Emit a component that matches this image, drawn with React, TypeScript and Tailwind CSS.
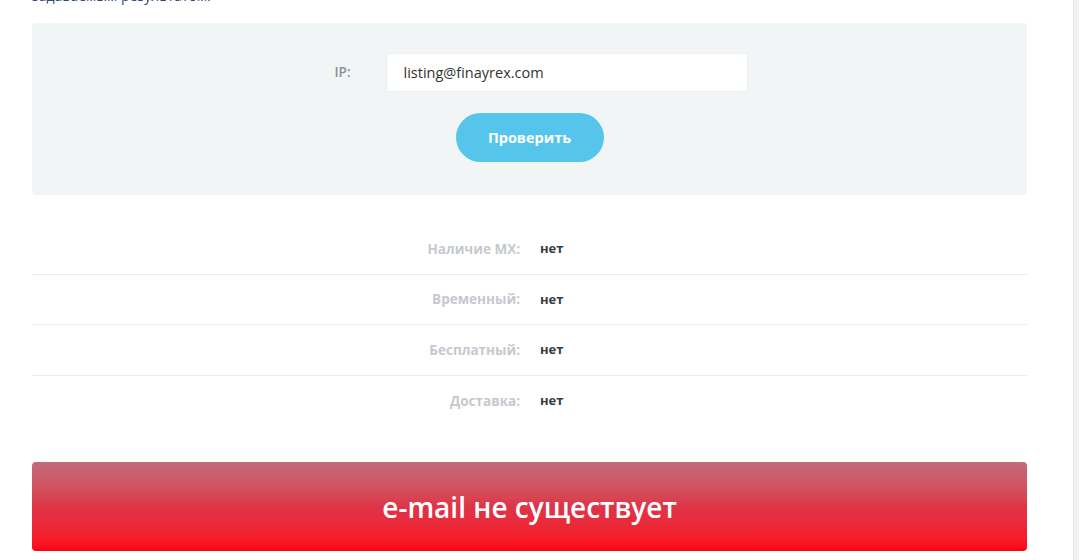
const ROWS = [
  { label: "Наличие MX:", value: "нет" },
  { label: "Временный:", value: "нет" },
  { label: "Бесплатный:", value: "нет" },
  { label: "Доставка:", value: "нет" },
];

export default function App() {
  return (
    <div className="flex h-[560px] w-[1079px] overflow-hidden bg-white font-['Open_Sans',sans-serif]">
      <main className="flex-1 pl-8 pr-[46px]">
        {/* cut-off intro text */}
        <p className="-mt-[13px] h-[13px] text-[14px] leading-[18px] text-[#2b4a7a]">
          задаваемым результатом.
        </p>

        {/* Check form */}
        <div className="mt-[23px] flex h-[172px] flex-col items-center rounded bg-[#f2f5f6] pt-[30px]">
          <div className="ml-[23px] flex items-center">
            <label className="w-[51px] text-[13.5px] font-semibold text-[#8b9099]">IP:</label>
            <input
              readOnly
              value="listing@finayrex.com"
              className="h-[39px] w-[362px] border border-[#eceff1] bg-white px-[17px] text-[14.5px] text-[#333] outline-none"
            />
          </div>
          <button className="mt-[21px] h-[49px] w-[148px] rounded-full bg-[#56c5ec] text-[14.5px] font-bold text-white">
            Проверить
          </button>
        </div>

        {/* Results */}
        <div className="mt-[29px]">
          {ROWS.map((row, i) => (
            <div
              key={row.label}
              className={`flex h-[50.5px] items-center ${i < ROWS.length - 1 ? "border-b border-[#e9ebee]" : ""}`}
            >
              <span className="w-[488px] text-right text-[13.5px] font-bold text-[#c5c9cf]">{row.label}</span>
              <span className="ml-[20px] text-[13px] font-bold text-[#343c49]">{row.value}</span>
            </div>
          ))}
        </div>

        {/* Status banner */}
        <div className="mt-[36px] flex h-[89px] items-center justify-center rounded bg-gradient-to-b from-[#c06b7b] via-[#de3447] to-[#ff0016]">
          <span className="text-[28px] font-semibold text-white">e-mail не существует</span>
        </div>
      </main>
      <div className="w-[6px] border-l border-[#e6e6e6] bg-[#f1f1f1]" />
    </div>
  );
}
